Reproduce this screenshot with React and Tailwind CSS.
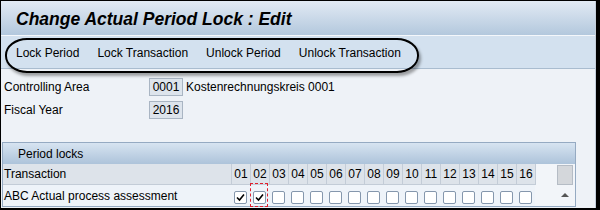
import React from 'react';

const periods = ['01', '02', '03', '04', '05', '06', '07', '08', '09', '10', '11', '12', '13', '14', '15', '16'];
const checked = ['01', '02'];

const Check = () => (
    <svg width="9" height="9" viewBox="0 0 9 9" className="block">
        <path d="M1 4.5 L3.5 7 L8 1.5" fill="none" stroke="#000" strokeWidth="1.6" />
    </svg>
);

const Box = ({ on }) => (
    <div className="w-[13px] h-[13px] border border-[#8597ad] bg-white rounded-[2px] flex items-center justify-center">
        {on && <Check />}
    </div>
);

const App = () => {
    return (
        <div
            className="w-[600px] h-[210px] overflow-hidden bg-black pt-px pl-px pr-[4px] pb-[2px] text-[12px] text-black"
            style={{ fontFamily: '"Liberation Sans", Arial, sans-serif' }}
        >
            <div className="relative h-full bg-[#eef2f7] flex flex-col border-r border-[#c3cedb]">
                {/* title */}
                <div className="h-[35px] shrink-0 bg-gradient-to-b from-[#e2eaf4] to-[#b3c8dd] border-b border-[#f4f7fb] pl-[15px] pt-[8px]">
                    <h1 className="text-[17.5px] font-bold italic leading-[20px]">Change Actual Period Lock : Edit</h1>
                </div>

                {/* toolbar */}
                <div className="h-[33px] shrink-0 bg-[#d3e1ef] border-b border-[#a9bccf] flex items-center gap-[18px] pl-[15px] pt-[2px]">
                    <span>Lock Period</span>
                    <span>Lock Transaction</span>
                    <span>Unlock Period</span>
                    <span>Unlock Transaction</span>
                </div>

                {/* fields */}
                <div className="pt-[9px] flex flex-col gap-[5px]">
                    <div className="flex items-center h-[18px]">
                        <span className="w-[148px] pl-[3px]">Controlling Area</span>
                        <div className="w-[34px] h-[18px] border border-[#a9b5c3] bg-[#dde4ec] flex items-center justify-center">0001</div>
                        <span className="pl-[3px]">Kostenrechnungskreis 0001</span>
                    </div>
                    <div className="flex items-center h-[18px]">
                        <span className="w-[148px] pl-[3px]">Fiscal Year</span>
                        <div className="w-[34px] h-[18px] border border-[#a9b5c3] bg-[#dde4ec] flex items-center justify-center">2016</div>
                    </div>
                </div>

                {/* period locks table */}
                <div className="mt-[23px] ml-px w-[574px] border border-[#95aac2] bg-[#f2f5f9]">
                    <div className="h-[21px] bg-gradient-to-b from-[#d7e4f1] to-[#adc3da] pl-[15px] flex items-center">
                        Period locks
                    </div>
                    <div className="flex h-[21px]">
                        <div className="w-[228px] bg-[#dde3ea] border-b border-[#c3ccd7] pl-[1px] flex items-center">Transaction</div>
                        {periods.map(p => (
                            <div key={p} className="w-[19px] bg-[#dde3ea] border-l border-b border-[#c3ccd7] flex items-center justify-center">
                                {p}
                            </div>
                        ))}
                        <div className="w-px bg-[#c3ccd7]" />
                        <div className="flex-1" />
                        <div className="w-[18px] pt-px">
                            <div className="w-[16px] h-[20px] bg-[#d4d7db] border border-[#b5bcc5]" />
                        </div>
                    </div>
                    <div className="flex h-[21px]">
                        <div className="w-[228px] bg-[#eef3f9] pl-[1px] flex items-center">ABC Actual process assessment</div>
                        {periods.map(p => (
                            <div key={p} className="relative w-[19px] pl-[3px] pt-[6px] bg-[#eef3f9]">
                                <Box on={checked.includes(p)} />
                                {p === '02' && (
                                    <span className="absolute left-0 -top-[2px] w-[18px] h-[24px] border border-dashed border-[#e0202e]" />
                                )}
                            </div>
                        ))}
                        <div className="flex-1" />
                        <div className="w-[18px] flex justify-center pt-[8px] pr-[2px]">
                            <div className="w-0 h-0 border-l-[4px] border-r-[4px] border-b-[4px] border-l-transparent border-r-transparent border-b-[#555]" />
                        </div>
                    </div>
                </div>

                {/* annotation ring */}
                <div className="absolute left-[4px] top-[37px] w-[414px] h-[35px] border-2 border-black rounded-[22px/17px] shadow-[2px_3px_3px_rgba(0,0,0,0.35)]" />
            </div>
        </div>
    );
};

export default App;
